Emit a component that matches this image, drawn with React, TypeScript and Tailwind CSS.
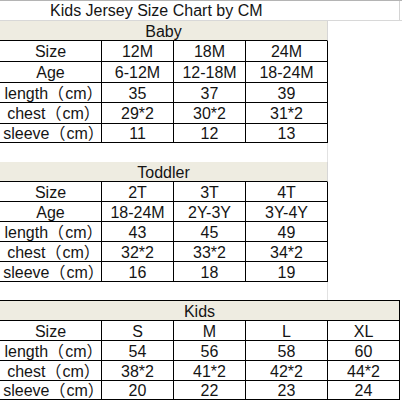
import React from 'react';

type Row = { label: string; values: string[]; h: string };

interface SizeTableProps {
  title: string;
  rows: Row[];
  wide?: boolean;
  headerClass: string;
}

const colWidths = ['w-[102px]', 'w-[72px]', 'w-[72px]', 'w-[82px]', 'w-[72px]'];

// label like "length（cm）" — trailing space of the closing bracket is trimmed
const Label: React.FC<{ text: string }> = ({ text }) => {
  const m = text.match(/^(\w+)（cm）$/);
  if (!m) return <>{text}</>;
  return (
    <>
      {m[1]}
      <span className="tracking-[-2px]">（</span>
      <span className="pl-[3px]">cm</span>
      <span className="tracking-[-6px]">）</span>
    </>
  );
};

const SizeTable: React.FC<SizeTableProps> = ({ title, rows, wide, headerClass }) => {
  return (
    <div className="flex flex-col">
      <div
        className={`${headerClass} ${wide ? 'w-[400px]' : 'w-[328px]'} bg-[#eeece1] border-b border-r flex items-center justify-center pt-[2px]`}
      >
        {title}
      </div>
      {rows.map((row) => (
        <div key={row.label} className={`${row.h} flex border-b border-black ${wide ? 'w-[400px]' : 'w-[328px]'}`}>
          {[row.label, ...row.values].map((v, i) => (
            <div
              key={i}
              className={`${colWidths[i]} shrink-0 border-r border-black flex items-center justify-center pt-[2px]`}
            >
              {i === 0 ? <Label text={v} /> : v}
            </div>
          ))}
        </div>
      ))}
    </div>
  );
};

export default function App() {
  return (
    <div className="w-[402px] h-[402px] overflow-hidden bg-white text-[#141414] text-[16px] leading-none font-['Liberation_Sans','Noto_Sans_CJK_SC',sans-serif]">
      {/* sheet title */}
      <div className="h-[21px] border-t border-b border-t-[#b4b4b4] border-b-[#d8d8d8] flex">
        <div className="w-[400px] border-r border-[#d4d4d4] flex items-center pl-[50px] pt-[1px]">
          Kids Jersey Size Chart by CM
        </div>
      </div>

      <SizeTable
        title="Baby"
        headerClass="h-[20px] border-b-black border-r-[#d6d6d6]"
        rows={[
          { label: 'Size', values: ['12M', '18M', '24M'], h: 'h-[21px]' },
          { label: 'Age', values: ['6-12M', '12-18M', '18-24M'], h: 'h-[21px]' },
          { label: 'length（cm）', values: ['35', '37', '39'], h: 'h-[20px]' },
          { label: 'chest（cm）', values: ['29*2', '30*2', '31*2'], h: 'h-[21px]' },
          { label: 'sleeve（cm）', values: ['11', '12', '13'], h: 'h-[19px]' },
        ]}
      />

      <div className="h-[19px] w-[328px] border-r border-[#e2e2e2]" />

      <SizeTable
        title="Toddler"
        headerClass="h-[20px] border-b-black border-r-[#d6d6d6]"
        rows={[
          { label: 'Size', values: ['2T', '3T', '4T'], h: 'h-[20px]' },
          { label: 'Age', values: ['18-24M', '2Y-3Y', '3Y-4Y'], h: 'h-[20px]' },
          { label: 'length（cm）', values: ['43', '45', '49'], h: 'h-[20px]' },
          { label: 'chest（cm）', values: ['32*2', '33*2', '34*2'], h: 'h-[20px]' },
          { label: 'sleeve（cm）', values: ['16', '18', '19'], h: 'h-[20px]' },
        ]}
      />

      <div className="h-[18px] w-[328px] border-r border-[#e2e2e2]" />

      <SizeTable
        title="Kids"
        wide
        headerClass="h-[21px] border-t border-black"
        rows={[
          { label: 'Size', values: ['S', 'M', 'L', 'XL'], h: 'h-[20px]' },
          { label: 'length（cm）', values: ['54', '56', '58', '60'], h: 'h-[20px]' },
          { label: 'chest（cm）', values: ['38*2', '41*2', '42*2', '44*2'], h: 'h-[20px]' },
          { label: 'sleeve（cm）', values: ['20', '22', '23', '24'], h: 'h-[19px]' },
        ]}
      />
    </div>
  );
}
